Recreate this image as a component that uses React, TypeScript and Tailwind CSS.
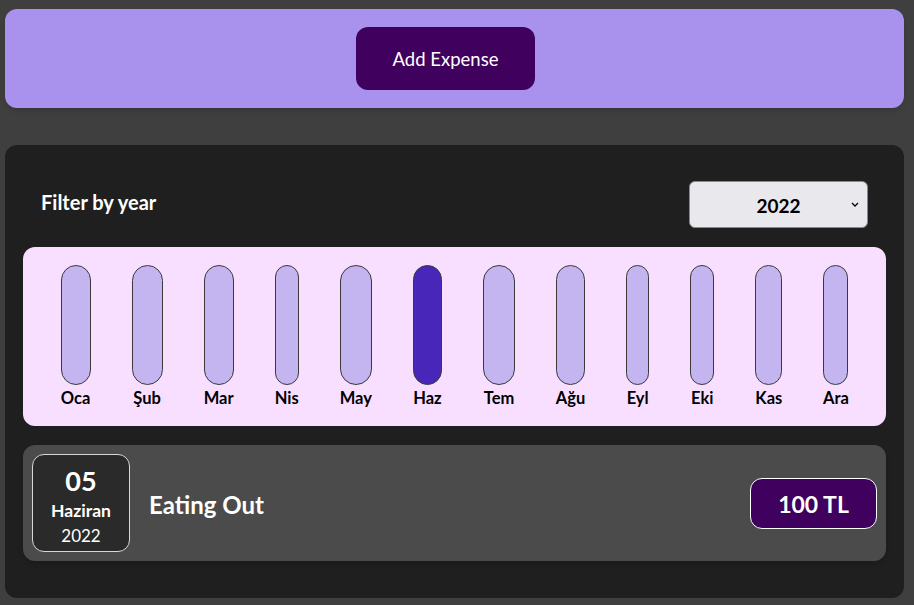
import { useState } from "react";

const months = [
  { label: "Oca", w: "w-[30px]" },
  { label: "Şub", w: "w-[31px]" },
  { label: "Mar", w: "w-[30px]" },
  { label: "Nis", w: "w-[24px]" },
  { label: "May", w: "w-[32px]" },
  { label: "Haz", w: "w-[29px]" },
  { label: "Tem", w: "w-[32px]" },
  { label: "Ağu", w: "w-[29px]" },
  { label: "Eyl", w: "w-[23px]" },
  { label: "Eki", w: "w-[24px]" },
  { label: "Kas", w: "w-[27px]" },
  { label: "Ara", w: "w-[25px]" },
];

function ChartBar({ label, w, active }: { label: string; w: string; active: boolean }) {
  return (
    <div className={`flex flex-col items-center ${w}`}>
      <div
        className={`h-[120px] w-full rounded-full border border-[#3a3a3a] ${
          active ? "bg-[#4826b9]" : "bg-[#c4b5f1]"
        }`}
      />
      <div className="mt-[3px] whitespace-nowrap text-[16.5px] font-bold leading-[20px] text-black">
        {label}
      </div>
    </div>
  );
}

export default function App() {
  const [year, setYear] = useState("2022");

  return (
    <div className="min-h-screen bg-[#3f3f3f] pl-[5px] pr-[10px] pt-[9px] pb-[7px] font-['Lato','Open_Sans',sans-serif]">
      {/* new expense */}
      <div className="flex justify-center rounded-xl bg-[#a892ee] py-[18px] pr-[18px] shadow-md">
        <button className="h-[63px] w-[179px] rounded-xl bg-[#40005d] pt-[3px] text-[18.5px] text-white">
          Add Expense
        </button>
      </div>

      {/* expenses */}
      <div className="mt-[37px] rounded-xl bg-[#1f1f1f] px-[18px] pt-[36px] pb-[37px]">
        <div className="flex items-center justify-between px-[18px]">
          <span className="pb-[5px] text-[20px] font-bold text-white">Filter by year</span>
          <div className="relative">
            <select
              value={year}
              onChange={(e) => setYear(e.target.value)}
              className="h-[47px] w-[179px] appearance-none rounded-md border border-[#8a8a8a] bg-[#e9e8ed] pt-[3px] text-center text-[19px] font-bold text-black [text-align-last:center]"
            >
              <option>2022</option>
              <option>2021</option>
              <option>2020</option>
              <option>2019</option>
            </select>
            <svg
              className="pointer-events-none absolute right-[9px] top-[21px]"
              width="8"
              height="5"
              viewBox="0 0 8 5"
              fill="none"
              stroke="black"
              strokeWidth="1.3"
            >
              <path d="M1 1l3 3 3-3" />
            </svg>
          </div>
        </div>

        {/* chart */}
        <div className="mt-[19px] flex justify-around rounded-xl bg-[#f8dfff] px-[17px] pt-[18px] pb-[18px]">
          {months.map((m) => (
            <ChartBar key={m.label} label={m.label} w={m.w} active={m.label === "Haz"} />
          ))}
        </div>

        {/* item */}
        <div className="mt-[19px] flex items-center rounded-xl bg-[#4b4b4b] p-[9px] shadow-md">
          <div className="flex h-[98px] w-[98px] flex-col items-center justify-center rounded-xl border border-[#d8d8d8] bg-[#2a2a2a] pt-[6px] text-white">
            <div className="text-[27px] font-bold leading-[32px]">05</div>
            <div className="text-[17.5px] font-bold leading-[28px]">Haziran</div>
            <div className="text-[17px] leading-[22px]">2022</div>
          </div>
          <h2 className="ml-[19px] flex-1 pt-[3px] text-[24px] font-bold text-white">Eating Out</h2>
          <div className="flex h-[51px] w-[127px] items-center justify-center rounded-xl border border-white bg-[#40005d] pt-[2px] text-[23px] font-bold text-white">
            100 TL
          </div>
        </div>
      </div>
    </div>
  );
}
